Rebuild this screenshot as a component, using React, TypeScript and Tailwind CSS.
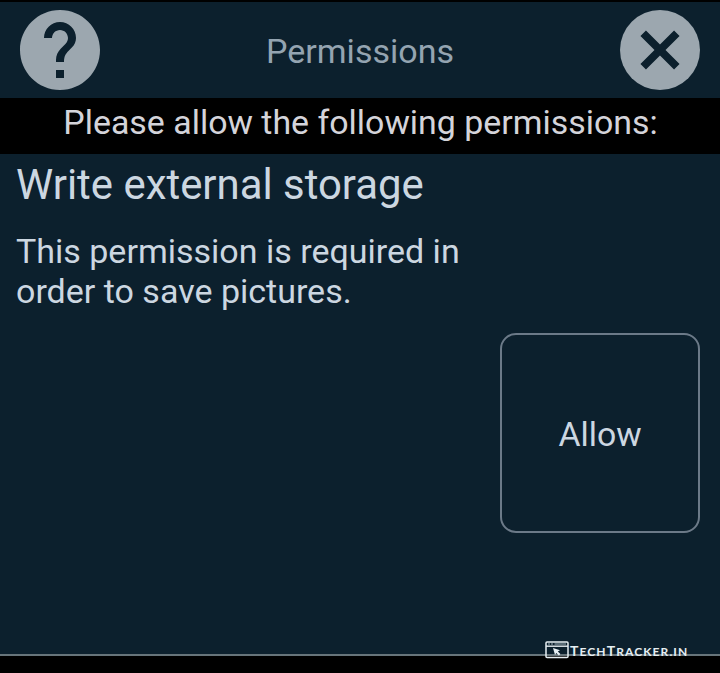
function HelpIcon() {
  return (
    <svg viewBox="2 2 20 20" className="size-20 shrink-0 text-[#9ca7af]" fill="currentColor">
      <path d="M12 2C6.48 2 2 6.48 2 12s4.48 10 10 10 10-4.48 10-10S17.52 2 12 2zm1 17h-2v-2h2v2zm2.07-7.75l-.9.92C13.45 12.9 13 13.5 13 15h-2v-.5c0-1.1.45-2.1 1.17-2.83l1.24-1.26c.37-.36.59-.86.59-1.41 0-1.1-.9-2-2-2s-2 .9-2 2H8c0-2.21 1.79-4 4-4s4 1.79 4 4c0 .88-.36 1.68-.93 2.25z" />
    </svg>
  );
}

function CloseIcon() {
  return (
    <svg viewBox="0 0 80 80" className="size-20 shrink-0" fill="none">
      <circle cx="40" cy="40" r="40" fill="#9ca7af" />
      <path d="M23.2 23.2L56.8 56.8M56.8 23.2L23.2 56.8" stroke="#0c202d" strokeWidth="7.8" />
    </svg>
  );
}

function BrowserIcon() {
  return (
    <svg viewBox="0 0 24 18" className="h-[18px] w-6" fill="none">
      <rect x="1" y="1" width="22" height="15.5" rx="1" stroke="#e6eef2" strokeWidth="1.5" />
      <path d="M1 5.2H23" stroke="#e6eef2" strokeWidth="1.4" />
      <path d="M3 3H5M6 3H8M9.5 3H21" stroke="#b8c8d0" strokeWidth="0.9" />
      <path d="M8 7l7 2.3-2.2 1.2 2.6 2.6-1.5 1.4-2.6-2.6L10 14z" fill="#e6eef2" />
    </svg>
  );
}

export default function App() {
  return (
    <div className="relative flex h-[673px] w-[720px] flex-col overflow-hidden bg-black pt-0.5 font-[Roboto,sans-serif] text-[#ccd7e1]">
      <header className="flex h-24 shrink-0 items-center justify-between bg-[#0c202d] px-5">
        <HelpIcon />
        <h1 className="pt-0.5 text-[34px] leading-10 text-[#94a4b1]">Permissions</h1>
        <CloseIcon />
      </header>
      <p className="h-14 shrink-0 pt-[5px] pl-px text-center text-[33.9px] leading-10 text-[#d4d4da]">
        Please allow the following permissions:
      </p>
      <main className="flex h-[502px] shrink-0 flex-col border-b-2 border-[#67747a] bg-[#0c202d] px-4 pt-1.5">
        <h2 className="text-[41.9px] leading-[50px]">Write external storage</h2>
        <p className="mt-[21px] w-[480px] text-[34px] leading-10">
          This permission is required in
          <br />
          order to save pictures.
        </p>
        <button className="mt-[22px] mr-1 size-[200px] self-end rounded-[16px] border-2 border-[#6c7a88] pt-1 text-[33.8px]">
          Allow
        </button>
      </main>
      <div className="absolute top-[641px] left-[545px] flex items-start text-[#e6eef2]">
        <BrowserIcon />
        <span className="mt-0.5 ml-px font-[Lato,sans-serif] text-[14px] leading-4 font-bold tracking-[1.1px] whitespace-nowrap">
          T<span className="text-[12px]">ECH</span>T<span className="text-[12px]">RACKER.IN</span>
        </span>
      </div>
    </div>
  );
}
